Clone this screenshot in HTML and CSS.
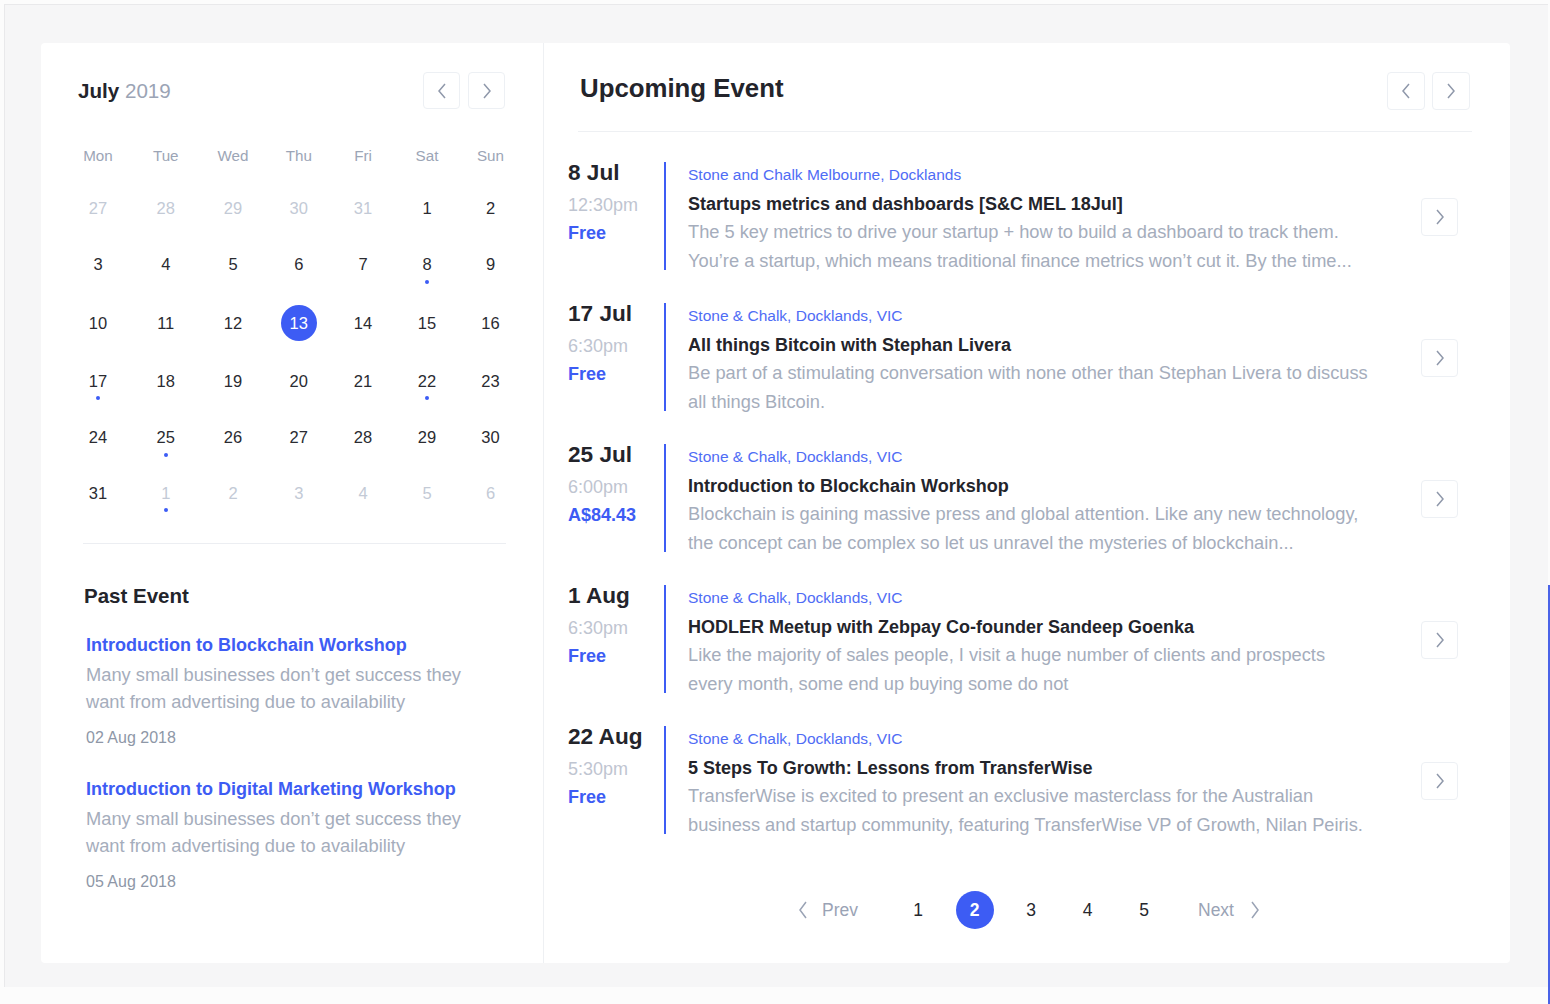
FILE: index.html
```html
<!DOCTYPE html>
<html>
<head>
<meta charset="utf-8">
<title>Events</title>
<link rel="stylesheet" href="styles.css">
</head>
<body>
<div class="frame">
  <div class="card">
    <section class="cal">
      <div class="cal-head">
        <div class="month"><b>July</b> <span>2019</span></div>
        <div class="navs">
          <button class="nav"><svg width="10" height="16" viewBox="0 0 10 16"><polyline points="8,1 2,8 8,15" fill="none" stroke="#8f98aa" stroke-width="1.5"/></svg></button>
          <button class="nav"><svg width="10" height="16" viewBox="0 0 10 16"><polyline points="2,1 8,8 2,15" fill="none" stroke="#8f98aa" stroke-width="1.5"/></svg></button>
        </div>
      </div>
      <div class="weekdays">
        <span>Mon</span><span>Tue</span><span>Wed</span><span>Thu</span><span>Fri</span><span>Sat</span><span>Sun</span>
      </div>
      <div class="days">
        <span class="d muted">27</span><span class="d muted">28</span><span class="d muted">29</span><span class="d muted">30</span><span class="d muted">31</span><span class="d">1</span><span class="d">2</span>
        <span class="d">3</span><span class="d">4</span><span class="d">5</span><span class="d">6</span><span class="d">7</span><span class="d">8<i class="dot"></i></span><span class="d">9</span>
        <span class="d">10</span><span class="d">11</span><span class="d">12</span><span class="d today"><em>13</em></span><span class="d">14</span><span class="d">15</span><span class="d">16</span>
        <span class="d">17<i class="dot"></i></span><span class="d">18</span><span class="d">19</span><span class="d">20</span><span class="d">21</span><span class="d">22<i class="dot"></i></span><span class="d">23</span>
        <span class="d">24</span><span class="d">25<i class="dot"></i></span><span class="d">26</span><span class="d">27</span><span class="d">28</span><span class="d">29</span><span class="d">30</span>
        <span class="d">31</span><span class="d muted">1<i class="dot"></i></span><span class="d muted">2</span><span class="d muted">3</span><span class="d muted">4</span><span class="d muted">5</span><span class="d muted">6</span>
      </div>
      <div class="sep"></div>
      <div class="past">
        <h3>Past Event</h3>
        <div class="past-item">
          <a class="past-title">Introduction to Blockchain Workshop</a>
          <p>Many small businesses don’t get success they<br>want from advertising due to availability</p>
          <div class="past-date">02 Aug 2018</div>
        </div>
        <div class="past-item">
          <a class="past-title">Introduction to Digital Marketing Workshop</a>
          <p>Many small businesses don’t get success they<br>want from advertising due to availability</p>
          <div class="past-date">05 Aug 2018</div>
        </div>
      </div>
    </section>

    <section class="upcoming">
      <div class="up-head">
        <h2>Upcoming Event</h2>
        <div class="navs up-navs">
          <button class="nav"><svg width="10" height="16" viewBox="0 0 10 16"><polyline points="8,1 2,8 8,15" fill="none" stroke="#8f98aa" stroke-width="1.5"/></svg></button>
          <button class="nav"><svg width="10" height="16" viewBox="0 0 10 16"><polyline points="2,1 8,8 2,15" fill="none" stroke="#8f98aa" stroke-width="1.5"/></svg></button>
        </div>
      </div>
      <div class="up-sep"></div>
      <div class="events">
        <div class="event">
          <div class="ev-date"><div class="ev-day">8 Jul</div><div class="ev-time">12:30pm</div><div class="ev-price">Free</div></div>
          <div class="ev-bar"></div>
          <div class="ev-body">
            <div class="ev-venue">Stone and Chalk Melbourne, Docklands</div>
            <div class="ev-title">Startups metrics and dashboards [S&amp;C MEL 18Jul]</div>
            <div class="ev-desc">The 5 key metrics to drive your startup + how to build a dashboard to track them.<br>You’re a startup, which means traditional finance metrics won’t cut it. By the time...</div>
          </div>
          <button class="ev-go"><svg width="10" height="16" viewBox="0 0 10 16"><polyline points="2,1 8,8 2,15" fill="none" stroke="#8f98aa" stroke-width="1.5"/></svg></button>
        </div>
        <div class="event">
          <div class="ev-date"><div class="ev-day">17 Jul</div><div class="ev-time">6:30pm</div><div class="ev-price">Free</div></div>
          <div class="ev-bar"></div>
          <div class="ev-body">
            <div class="ev-venue">Stone &amp; Chalk, Docklands, VIC</div>
            <div class="ev-title">All things Bitcoin with Stephan Livera</div>
            <div class="ev-desc">Be part of a stimulating conversation with none other than Stephan Livera to discuss<br>all things Bitcoin.</div>
          </div>
          <button class="ev-go"><svg width="10" height="16" viewBox="0 0 10 16"><polyline points="2,1 8,8 2,15" fill="none" stroke="#8f98aa" stroke-width="1.5"/></svg></button>
        </div>
        <div class="event">
          <div class="ev-date"><div class="ev-day">25 Jul</div><div class="ev-time">6:00pm</div><div class="ev-price">A$84.43</div></div>
          <div class="ev-bar"></div>
          <div class="ev-body">
            <div class="ev-venue">Stone &amp; Chalk, Docklands, VIC</div>
            <div class="ev-title">Introduction to Blockchain Workshop</div>
            <div class="ev-desc">Blockchain is gaining massive press and global attention. Like any new technology,<br>the concept can be complex so let us unravel the mysteries of blockchain...</div>
          </div>
          <button class="ev-go"><svg width="10" height="16" viewBox="0 0 10 16"><polyline points="2,1 8,8 2,15" fill="none" stroke="#8f98aa" stroke-width="1.5"/></svg></button>
        </div>
        <div class="event">
          <div class="ev-date"><div class="ev-day">1 Aug</div><div class="ev-time">6:30pm</div><div class="ev-price">Free</div></div>
          <div class="ev-bar"></div>
          <div class="ev-body">
            <div class="ev-venue">Stone &amp; Chalk, Docklands, VIC</div>
            <div class="ev-title">HODLER Meetup with Zebpay Co-founder Sandeep Goenka</div>
            <div class="ev-desc">Like the majority of sales people, I visit a huge number of clients and prospects<br>every month, some end up buying some do not</div>
          </div>
          <button class="ev-go"><svg width="10" height="16" viewBox="0 0 10 16"><polyline points="2,1 8,8 2,15" fill="none" stroke="#8f98aa" stroke-width="1.5"/></svg></button>
        </div>
        <div class="event">
          <div class="ev-date"><div class="ev-day">22 Aug</div><div class="ev-time">5:30pm</div><div class="ev-price">Free</div></div>
          <div class="ev-bar"></div>
          <div class="ev-body">
            <div class="ev-venue">Stone &amp; Chalk, Docklands, VIC</div>
            <div class="ev-title">5 Steps To Growth: Lessons from TransferWise</div>
            <div class="ev-desc">TransferWise is excited to present an exclusive masterclass for the Australian<br>business and startup community, featuring TransferWise VP of Growth, Nilan Peiris.</div>
          </div>
          <button class="ev-go"><svg width="10" height="16" viewBox="0 0 10 16"><polyline points="2,1 8,8 2,15" fill="none" stroke="#8f98aa" stroke-width="1.5"/></svg></button>
        </div>
      </div>
      <nav class="pager">
        <a class="pg-side prev"><svg width="10" height="18" viewBox="0 0 10 18"><polyline points="8,1 2,9 8,17" fill="none" stroke="#9aa3b5" stroke-width="1.5"/></svg><span>Prev</span></a>
        <div class="pg-nums">
          <a class="pg">1</a><a class="pg on">2</a><a class="pg">3</a><a class="pg">4</a><a class="pg">5</a>
        </div>
        <a class="pg-side next"><span>Next</span><svg width="10" height="18" viewBox="0 0 10 18"><polyline points="2,1 8,9 2,17" fill="none" stroke="#9aa3b5" stroke-width="1.5"/></svg></a>
      </nav>
    </section>
  </div>
</div>
</body>
</html>
```

FILE: styles.css
```css
* { box-sizing: border-box; margin: 0; padding: 0; }

body {
  width: 1550px;
  height: 1004px;
  overflow: hidden;
  background: #fcfcfc;
  font-family: "Liberation Sans", Arial, sans-serif;
  color: #26272e;
}

.frame {
  position: relative;
  margin: 4px 0 0 4px;
  width: 1544px;
  height: 983px;
  background: #f6f6f7;
  border-top: 1px solid #e9e9eb;
  border-left: 1px solid #e9e9eb;
  padding: 38px 38px 24px 36px;
}

.frame::after {
  content: "";
  position: absolute;
  right: -2px;
  top: 580px;
  bottom: -17px;
  width: 2px;
  background: #4a63e8;
}

.card {
  display: flex;
  height: 100%;
  background: #fff;
  border-radius: 4px;
}

button {
  font: inherit;
  cursor: pointer;
}

.nav, .ev-go {
  display: flex;
  align-items: center;
  justify-content: center;
  background: #fff;
  border: 1px solid #edf0f4;
  border-radius: 4px;
}

.nav { width: 37px; height: 37px; }

.navs { display: flex; gap: 8px; }

/* calendar */
.cal {
  width: 503px;
  border-right: 1px solid #eef0f3;
  padding: 29px 20px 0 23px;
}

.cal-head {
  display: flex;
  justify-content: space-between;
  align-items: center;
  height: 37px;
  padding: 0 18px 0 14px;
}

.month { font-size: 20.6px; }
.month b { font-weight: 700; color: #23242b; }
.month span { color: #9ba4b5; }

.weekdays, .days {
  display: grid;
  grid-template-columns: 68px 67.5px 67px 64.5px 64px 64px 63px;
  text-align: center;
}

.weekdays {
  margin-top: 31px;
  height: 30px;
  align-items: center;
  font-size: 15.2px;
  color: #9ca5b6;
}

.days {
  margin-top: 10px;
  grid-template-rows: 56px 57.5px 59px 57.5px 55.5px 55.5px;
}

.d {
  position: relative;
  display: flex;
  align-items: center;
  justify-content: center;
  font-size: 16.5px;
  color: #2a2b31;
}

.d.muted { color: #c3cad6; }

.dot {
  position: absolute;
  left: 50%;
  top: calc(50% + 15px);
  width: 4px;
  height: 4px;
  margin-left: -2px;
  border-radius: 50%;
  background: #3c5cf5;
}

.today em {
  display: flex;
  align-items: center;
  justify-content: center;
  width: 36px;
  height: 36px;
  border-radius: 50%;
  background: #3d5cf4;
  color: #fff;
  font-style: normal;
}

.sep {
  height: 1px;
  background: #eceef2;
  margin: 22px 17px 0 19px;
}

.past { padding: 40px 0 0 20px; }

.past h3 {
  font-size: 20.5px;
  line-height: 24px;
  font-weight: 700;
  color: #23242b;
}

.past-item { margin-top: 25px; padding-left: 2px; }
.past-item + .past-item { margin-top: 29px; }

.past-title {
  display: block;
  font-size: 18px;
  line-height: 24px;
  font-weight: 700;
  color: #3d5cf4;
}

.past-item p {
  margin-top: 4px;
  font-size: 18.3px;
  line-height: 27px;
  color: #a5adbc;
}

.past-date {
  margin-top: 13px;
  font-size: 16px;
  line-height: 20px;
  color: #8e97a7;
}

/* upcoming */
.upcoming {
  flex: 1;
  padding-top: 29px;
}

.up-head {
  display: flex;
  justify-content: space-between;
  align-items: center;
  height: 38px;
  margin: 0 40px 0 36px;
}

.up-head h2 {
  font-size: 25.8px;
  line-height: 30px;
  padding-bottom: 6px;
  font-weight: 700;
  color: #23242b;
}

.up-navs { gap: 7px; }
.up-navs .nav { width: 38px; height: 38px; }

.up-sep {
  height: 1px;
  background: #eef0f3;
  margin: 21px 38px 0 34px;
}

.events {
  display: flex;
  flex-direction: column;
  gap: 33px;
  margin-top: 30px;
  padding-left: 24px;
}

.event {
  display: flex;
  height: 108px;
}

.ev-date { width: 96px; }

.ev-day {
  font-size: 22.6px;
  line-height: 22px;
  font-weight: 700;
  color: #23242b;
}

.ev-time {
  margin-top: 7px;
  font-size: 18px;
  line-height: 28px;
  color: #bfc5d1;
}

.ev-price {
  font-size: 18px;
  line-height: 28px;
  font-weight: 700;
  color: #3d5cf4;
}

.ev-bar {
  width: 2px;
  background: #3d5cf4;
}

.ev-body {
  flex: 1;
  padding: 2px 0 0 22px;
  white-space: nowrap;
}

.ev-venue {
  font-size: 15.5px;
  line-height: 22px;
  color: #4f6cf5;
}

.ev-title {
  margin-top: 4px;
  font-size: 18px;
  line-height: 28px;
  font-weight: 700;
  color: #23242b;
}

.ev-desc {
  font-size: 18.25px;
  line-height: 28.5px;
  color: #a5adbc;
}

.ev-go {
  align-self: center;
  width: 37px;
  height: 38px;
  margin: 2px 52px 0 0;
}

.pager {
  display: flex;
  justify-content: center;
  align-items: center;
  margin-top: 57px;
  padding-left: 4px;
  font-size: 17.5px;
}

.pg-side {
  display: flex;
  align-items: center;
  color: #9aa3b5;
}

.prev { gap: 14px; margin-right: 41px; }
.next { gap: 16px; margin-left: 35px; }

.pg-nums { display: flex; gap: 18.5px; }

.pg {
  display: flex;
  align-items: center;
  justify-content: center;
  width: 38px;
  height: 38px;
  border-radius: 50%;
  color: #26272e;
}

.pg.on {
  background: #3d5cf4;
  color: #fff;
  font-weight: 700;
}
```
